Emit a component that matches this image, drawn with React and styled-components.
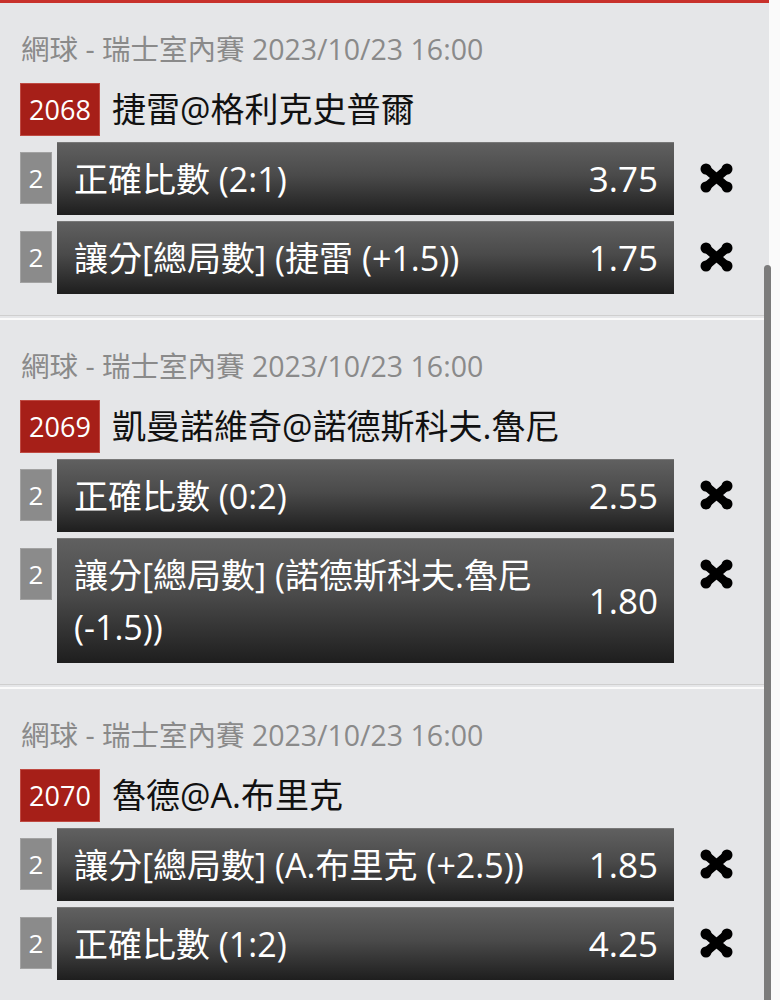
import React from "react";
import styled, { createGlobalStyle } from "styled-components";

const GlobalStyle = createGlobalStyle`
  html, body { margin: 0; padding: 0; background: #fafafa; }
  body { font-family: "Open Sans", "Noto Sans CJK TC", sans-serif; }
  * { box-sizing: border-box; }
`;

const Page = styled.div`
  position: relative;
  width: 780px;
  height: 1000px;
  overflow: hidden;
  background: #fafafa;
`;

const Panel = styled.div`
  width: 769px;
  background: #e5e6e8;
  border-top: 3px solid #c8312b;
`;

const Section = styled.section`
  padding: 27px 0 21px 20px;
  border-bottom: 1px solid #cfcfcf;
  margin-bottom: 2px;
  background: #e5e6e8;
  & + & {
    border-top: 2px solid #fafafa;
  }
`;

const Header = styled.div`
  font-size: 28.5px;
  line-height: 38px;
  color: #8a8a8a;
  margin: 0 0 15px 1px;
  white-space: nowrap;
`;

const MatchRow = styled.div`
  display: flex;
  align-items: center;
  gap: 12px;
`;

const Badge = styled.div`
  width: 80px;
  height: 53px;
  display: flex;
  align-items: center;
  justify-content: center;
  background: #a61f18;
  border: 1px solid #bf4a42;
  color: #fff;
  font-size: 27px;
`;

const Title = styled.div`
  font-size: 34px;
  color: #111;
  line-height: 53px;
  white-space: nowrap;
`;

const Bets = styled.div`
  display: flex;
  flex-direction: column;
  gap: 6px;
  margin-top: 6px;
`;

const BetRow = styled.div`
  display: flex;
  align-items: flex-start;
`;

const Count = styled.div`
  width: 32px;
  height: 52px;
  margin-top: 10px;
  margin-right: 5px;
  display: flex;
  align-items: center;
  justify-content: center;
  background: #8b8b8b;
  border: 1px solid #a2a2a2;
  color: #fff;
  font-size: 26px;
`;

const Bar = styled.div`
  flex: 1;
  display: flex;
  align-items: center;
  gap: 12px;
  padding: 10px 16px 10px 17px;
  background: linear-gradient(#606060 0%, #4a4a4a 45%, #1e1e1e 100%);
  border-top: 1px solid #787878;
  color: #fff;
`;

const Label = styled.div`
  flex: 1;
  font-size: 34px;
  line-height: 52px;
`;

const Odds = styled.div`
  min-width: 84px;
  text-align: right;
  font-size: 35px;
  line-height: 52px;
`;

const CloseCol = styled.div`
  width: 95px;
  padding: 21px 0 0 26px;
  display: flex;
`;

const Scrollbar = styled.div`
  position: absolute;
  left: 764px;
  top: 265px;
  width: 7px;
  height: 760px;
  border-radius: 4px;
  background: #7b7b7b;
`;

const CloseIcon = () => (
  <svg width="33" height="30" viewBox="0 0 33 30" aria-hidden="true">
    <g stroke="#000" strokeWidth="8.5" strokeLinecap="round">
      <line x1="6" y1="6" x2="27" y2="24" />
      <line x1="27" y1="6" x2="6" y2="24" />
    </g>
    <g fill="#000">
      <circle cx="6" cy="6" r="5.5" />
      <circle cx="27" cy="6" r="5.5" />
      <circle cx="6" cy="24" r="5.5" />
      <circle cx="27" cy="24" r="5.5" />
    </g>
  </svg>
);

const data = [
  {
    header: "網球 - 瑞士室內賽 2023/10/23 16:00",
    no: "2068",
    title: "捷雷@格利克史普爾",
    bets: [
      { label: "正確比數 (2:1)", odds: "3.75" },
      { label: "讓分[總局數] (捷雷 (+1.5))", odds: "1.75" },
    ],
  },
  {
    header: "網球 - 瑞士室內賽 2023/10/23 16:00",
    no: "2069",
    title: "凱曼諾維奇@諾德斯科夫.魯尼",
    bets: [
      { label: "正確比數 (0:2)", odds: "2.55" },
      { label: "讓分[總局數] (諾德斯科夫.魯尼 (-1.5))", odds: "1.80" },
    ],
  },
  {
    header: "網球 - 瑞士室內賽 2023/10/23 16:00",
    no: "2070",
    title: "魯德@A.布里克",
    bets: [
      { label: "讓分[總局數] (A.布里克 (+2.5))", odds: "1.85" },
      { label: "正確比數 (1:2)", odds: "4.25" },
    ],
  },
];

export default function App() {
  return (
    <Page>
      <GlobalStyle />
      <Panel>
        {data.map((m) => (
          <Section key={m.no}>
            <Header>{m.header}</Header>
            <MatchRow>
              <Badge>{m.no}</Badge>
              <Title>{m.title}</Title>
            </MatchRow>
            <Bets>
              {m.bets.map((b, i) => (
                <BetRow key={i}>
                  <Count>2</Count>
                  <Bar>
                    <Label>{b.label}</Label>
                    <Odds>{b.odds}</Odds>
                  </Bar>
                  <CloseCol>
                    <CloseIcon />
                  </CloseCol>
                </BetRow>
              ))}
            </Bets>
          </Section>
        ))}
      </Panel>
      <Scrollbar />
    </Page>
  );
}
